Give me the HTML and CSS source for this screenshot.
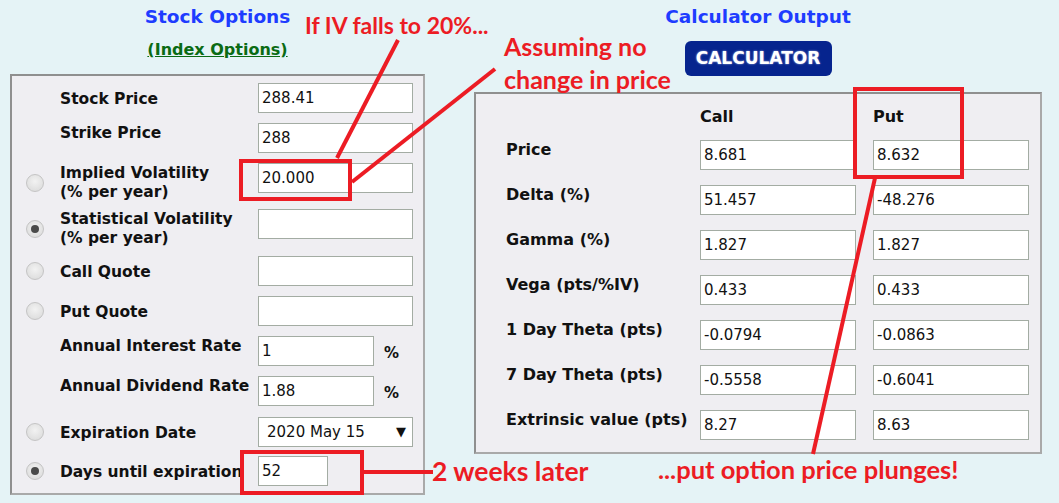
FILE: index.html
```html
<!DOCTYPE html>
<html lang="en">
<head>
    <meta charset="UTF-8">
    <title>Option Calculator</title>
    <link rel="stylesheet" href="styles.css">
</head>
<body>
<div class="page">
    <div class="col-left">
        <h2 class="title">Stock Options</h2>
        <div class="sub"><a href="#">(Index Options)</a></div>
        <div class="panel inputs">
            <div class="row r40">
                <span class="radio none"></span>
                <span class="lbl">Stock Price</span>
                <span class="box">288.41</span>
            </div>
            <div class="row r40">
                <span class="radio none"></span>
                <span class="lbl up">Strike Price</span>
                <span class="box">288</span>
            </div>
            <div class="row r46">
                <span class="radio"></span>
                <span class="lbl dn">Implied Volatility<br>(% per year)</span>
                <span class="box">20.000</span>
            </div>
            <div class="row r47">
                <span class="radio on"></span>
                <span class="lbl dn">Statistical Volatility<br>(% per year)</span>
                <span class="box"></span>
            </div>
            <div class="row r40">
                <span class="radio"></span>
                <span class="lbl">Call Quote</span>
                <span class="box"></span>
            </div>
            <div class="row r40">
                <span class="radio"></span>
                <span class="lbl">Put Quote</span>
                <span class="box"></span>
            </div>
            <div class="row r40">
                <span class="radio none"></span>
                <span class="lbl up">Annual Interest Rate</span>
                <span class="box short">1</span>
                <span class="pct">%</span>
            </div>
            <div class="row r41">
                <span class="radio none"></span>
                <span class="lbl up">Annual Dividend Rate</span>
                <span class="box short">1.88</span>
                <span class="pct">%</span>
            </div>
            <div class="row r39">
                <span class="radio"></span>
                <span class="lbl">Expiration Date</span>
                <span class="box select">2020 May 15<i>&#9660;</i></span>
            </div>
            <div class="row r30">
                <span class="radio on"></span>
                <span class="lbl">Days until expiration</span>
                <span class="box tiny">52</span>
            </div>
        </div>
    </div>

    <div class="col-right">
        <h2 class="title">Calculator Output</h2>
        <div class="btn-wrap"><span class="calc-btn">CALCULATOR</span></div>
        <div class="panel output">
            <div class="out-head">
                <span class="lbl"></span>
                <span class="cell">Call</span>
                <span class="cell">Put</span>
            </div>
            <div class="out-row"><span class="lbl">Price</span><span class="box">8.681</span><span class="box">8.632</span></div>
            <div class="out-row"><span class="lbl">Delta (%)</span><span class="box">51.457</span><span class="box">-48.276</span></div>
            <div class="out-row"><span class="lbl">Gamma (%)</span><span class="box">1.827</span><span class="box">1.827</span></div>
            <div class="out-row"><span class="lbl">Vega (pts/%IV)</span><span class="box">0.433</span><span class="box">0.433</span></div>
            <div class="out-row"><span class="lbl">1 Day Theta (pts)</span><span class="box">-0.0794</span><span class="box">-0.0863</span></div>
            <div class="out-row"><span class="lbl">7 Day Theta (pts)</span><span class="box">-0.5558</span><span class="box">-0.6041</span></div>
            <div class="out-row"><span class="lbl">Extrinsic value (pts)</span><span class="box">8.27</span><span class="box">8.63</span></div>
        </div>
    </div>

    <!-- annotations drawn over the screenshot -->
    <svg class="marks" width="1059" height="503" viewBox="0 0 1059 503">
        <g fill="none" stroke="#ec1c24" stroke-width="4">
            <rect x="241" y="161" width="109" height="38"/>
            <rect x="855" y="89" width="107" height="88"/>
            <rect x="242" y="452" width="120" height="41"/>
        </g>
        <g stroke="#ec1c24" stroke-width="4">
            <line x1="337" y1="158" x2="398" y2="40"/>
            <line x1="352" y1="182" x2="495" y2="69"/>
            <line x1="875" y1="178" x2="813" y2="454"/>
            <line x1="363" y1="472" x2="433" y2="472"/>
        </g>
    </svg>
    <div class="note n1">If IV falls to 20%...</div>
    <div class="note n2">Assuming no<br>change in price</div>
    <div class="note n3">2 weeks later</div>
    <div class="note n4">...put option price plunges!</div>
</div>
</body>
</html>
```

FILE: styles.css
```css
html, body {
    margin: 0;
    padding: 0;
}
body {
    background: #e5f3f6;
    font-family: "DejaVu Sans", Verdana, sans-serif;
    color: #111;
}
.page {
    position: relative;
    width: 1059px;
    height: 503px;
    overflow: hidden;
}
.col-left {
    float: left;
    width: 415px;
    margin-left: 10px;
}
.col-right {
    float: left;
    width: 568px;
    margin-left: 49px;
}
.title {
    margin: 0;
    height: 34px;
    line-height: 34px;
    text-align: center;
    font-size: 18.5px;
    font-weight: bold;
    color: #1e3cff;
}
.sub {
    height: 40px;
    line-height: 32px;
    text-align: center;
    font-size: 16px;
    font-weight: bold;
}
.sub a {
    color: #0b6b14;
}
.panel {
    box-sizing: border-box;
    background: #efeef2;
    border: 2px solid #8f8f8f;
    border-right-color: #a9a9a9;
    border-bottom-color: #a9a9a9;
}
.box {
    box-sizing: border-box;
    display: block;
    height: 30px;
    background: #fff;
    border: 1px solid #a3aca3;
    font-size: 15px;
    line-height: 28px;
    padding-left: 3px;
    color: #111;
}

/* left input panel */
.inputs {
    width: 415px;
    height: 421px;
    padding: 7px 10px 0 14px;
}
.row {
    display: flex;
}
.r40 { height: 40px; }
.r41 { height: 41px; }
.r46 { height: 46px; }
.r47 { height: 47px; }
.r39 { height: 39px; }
.r30 { height: 30px; }
.row .box {
    width: 155px;
    flex: none;
}
.row .box.short { width: 116px; }
.row .box.tiny { width: 70px; }
.row .box.select {
    display: flex;
    justify-content: space-between;
    padding: 0 6px 0 8px;
}
.select i {
    font-style: normal;
    font-size: 13px;
}
.radio {
    box-sizing: border-box;
    width: 18px;
    height: 18px;
    border-radius: 50%;
    border: 1px solid #c4c4c4;
    background: radial-gradient(circle at 50% 40%, #f2f2f2, #d8d8d8);
    margin: 6px 16px 0 0;
    flex: none;
    position: relative;
}
.r46 .radio, .r47 .radio { margin-top: 11px; }
.radio.none { visibility: hidden; }
.radio.on::after {
    content: "";
    position: absolute;
    left: 4px;
    top: 4px;
    width: 8px;
    height: 8px;
    border-radius: 50%;
    background: #4a4a4a;
}
.row .lbl {
    width: 198px;
    flex: none;
    font-size: 15.5px;
    font-weight: bold;
    line-height: 19px;
    margin-top: 7px;
    white-space: nowrap;
    overflow: hidden;
}
.r46 .lbl, .r47 .lbl { margin-top: 1px; }
.row .lbl.up { margin-top: 1px; }
.pct {
    font-size: 15px;
    font-weight: bold;
    margin-left: 10px;
    margin-top: 8px;
}

/* right output panel */
.btn-wrap {
    height: 58px;
    text-align: center;
}
.calc-btn {
    display: inline-block;
    margin-top: 7px;
    width: 147px;
    height: 35px;
    line-height: 35px;
    border-radius: 6px;
    background: #06248e;
    color: #fff;
    font-size: 17px;
    font-weight: bold;
    text-shadow: 0 0 2px #b4bde6;
}
.output {
    width: 568px;
    height: 362px;
    padding: 10px 0 0 30px;
}
.out-head, .out-row {
    display: flex;
}
.out-head {
    height: 36px;
    font-size: 16px;
    font-weight: bold;
    line-height: 26px;
}
.out-row {
    height: 45px;
}
.output .lbl {
    width: 194px;
    flex: none;
    font-size: 16px;
    font-weight: bold;
    line-height: 20px;
}
.output .box, .output .cell {
    width: 156px;
    flex: none;
    margin-right: 17px;
}

/* red annotations */
.marks {
    position: absolute;
    left: 0;
    top: 0;
}
.note {
    position: absolute;
    font-family: Lato, "Open Sans", sans-serif;
    font-weight: bold;
    font-size: 23px;
    line-height: 33px;
    color: #ec1c24;
    white-space: nowrap;
}
.n1 { left: 305px; top: 9px; }
.n2 { left: 504px; top: 30px; font-size: 25px; }
.n3 { left: 432px; top: 455px; font-size: 26.5px; }
.n4 { left: 658px; top: 453px; font-size: 25.5px; }
```
